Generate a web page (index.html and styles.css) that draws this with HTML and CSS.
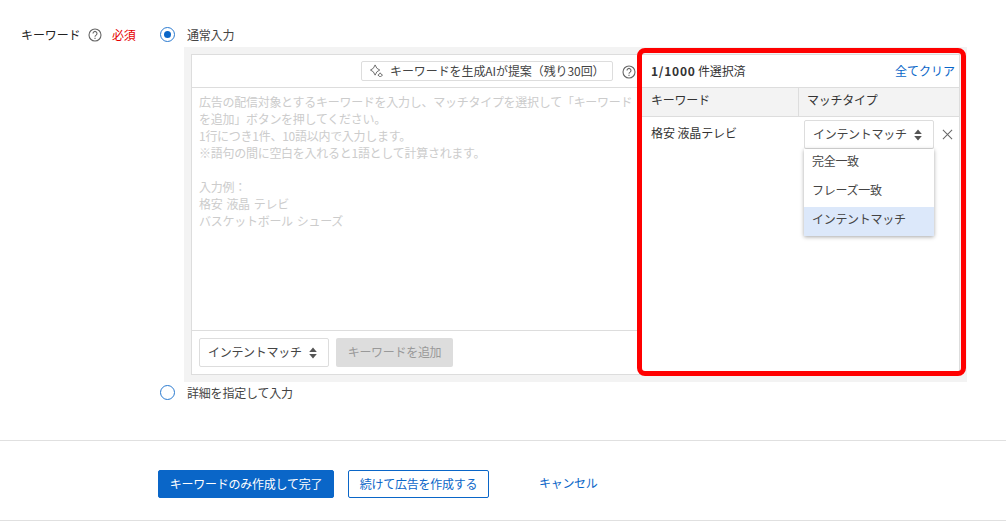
FILE: index.html
```html
<!DOCTYPE html>
<html lang="ja">
<head>
<meta charset="utf-8">
<title>キーワード</title>
<link rel="stylesheet" href="styles.css">
</head>
<body>
<main class="page">
  <section class="form-row">
    <div class="label-col">
      <span class="label">キーワード</span>
      <svg class="help" viewBox="0 0 14 14"><circle cx="7" cy="7" r="6" /><path d="M5 5.4a2 2 0 1 1 3.1 1.7c-.8.5-1.1.9-1.1 1.7" /><path d="M7 9.8v1.2" /></svg>
      <span class="required">必須</span>
    </div>
    <div class="input-col">
      <div class="radio-line">
        <span class="radio checked"></span>
        <span class="radio-text">通常入力</span>
      </div>
      <div class="gray-panel">
        <div class="editor">
          <div class="left-pane">
            <div class="toolbar">
              <div class="ai-button">
                <svg class="sparkle" viewBox="0 0 14 14"><path d="M5.5 1 L7.4 4.6 L10.5 6.5 L7.4 8.4 L5.5 12 L3.6 8.4 L0.5 6.5 L3.6 4.6 Z" /><path d="M11 9.5 L12 11 L13.5 12 L12 13 L11 14 L10 13 L8.5 12 L10 11 Z" /></svg>
                <span>キーワードを生成AIが提案（残り30回）</span>
              </div>
              <svg class="help" viewBox="0 0 14 14"><circle cx="7" cy="7" r="6" /><path d="M5 5.4a2 2 0 1 1 3.1 1.7c-.8.5-1.1.9-1.1 1.7" /><path d="M7 9.8v1.2" /></svg>
            </div>
            <div class="placeholder">
              <p>広告の配信対象とするキーワードを入力し、マッチタイプを選択して「キーワード</p>
              <p>を追加」ボタンを押してください。</p>
              <p>1行につき1件、10語以内で入力します。</p>
              <p>※語句の間に空白を入れると1語として計算されます。</p>
              <p class="blank">&nbsp;</p>
              <p>入力例：</p>
              <p>格安 液晶 テレビ</p>
              <p>バスケットボール シューズ</p>
            </div>
            <div class="add-bar">
              <div class="select">
                <span>インテントマッチ</span>
                <svg class="updown" viewBox="0 0 8 12"><path d="M4 0.5 L7.8 5 H0.2 Z" /><path d="M4 11.5 L7.8 7 H0.2 Z" /></svg>
              </div>
              <div class="add-button">キーワードを追加</div>
            </div>
          </div>
          <div class="right-pane">
            <div class="right-head">
              <span class="count"><b>1/1000</b> 件選択済</span>
              <a class="link">全てクリア</a>
            </div>
            <div class="table-head">
              <div class="th-keyword">キーワード</div>
              <div class="th-type">マッチタイプ</div>
            </div>
            <div class="table-row">
              <div class="td-keyword">格安 液晶テレビ</div>
              <div class="select row-select">
                <span>インテントマッチ</span>
                <svg class="updown" viewBox="0 0 8 12"><path d="M4 0.5 L7.8 5 H0.2 Z" /><path d="M4 11.5 L7.8 7 H0.2 Z" /></svg>
              </div>
              <svg class="close" viewBox="0 0 12 12"><path d="M1 1 L11 11 M11 1 L1 11" /></svg>
              <ul class="menu">
                <li>完全一致</li>
                <li>フレーズ一致</li>
                <li class="active">インテントマッチ</li>
              </ul>
            </div>
          </div>
          <div class="highlight"></div>
        </div>
      </div>
      <div class="radio-line second">
        <span class="radio"></span>
        <span class="radio-text">詳細を指定して入力</span>
      </div>
    </div>
  </section>
  <footer class="actions">
    <button class="btn primary">キーワードのみ作成して完了</button>
    <button class="btn outline">続けて広告を作成する</button>
    <a class="link cancel">キャンセル</a>
  </footer>
</main>
</body>
</html>
```
FILE: styles.css
```css
* { box-sizing: border-box; }
html, body { margin: 0; padding: 0; background: #fff; }
body {
  width: 1006px;
  height: 521px;
  overflow: hidden;
  font-family: "Noto Sans CJK JP", "Noto Sans", sans-serif;
  font-size: 12px;
  line-height: 17px;
  color: #333;
}
p { margin: 0; }
.page { display: flex; flex-direction: column; }
.form-row { display: flex; padding-top: 26px; height: 440px; }
.label-col { width: 160px; padding-left: 21px; display: flex; align-items: flex-start; }
.label { color: #222; width: 67px; letter-spacing: -0.1px; }
.help { width: 14px; height: 14px; fill: none; stroke: #666; stroke-width: 1.1; flex: none; margin-top: 2px; }
.required { color: #e60000; margin-left: 10px; letter-spacing: -0.2px; }
.input-col { display: flex; flex-direction: column; width: 807px; }
.radio-line { display: flex; align-items: center; height: 17px; }
.radio { width: 15px; height: 15px; border-radius: 50%; border: 1.5px solid #2a7ad0; background: #fff; flex: none; position: relative; }
.radio.checked::after { content: ""; position: absolute; left: 2.5px; top: 2.5px; width: 7px; height: 7px; border-radius: 50%; background: #0a66c8; }
.radio-text { margin-left: 12px; color: #444; letter-spacing: -0.2px; }
.gray-panel { margin: 4px 0 0 24px; background: #f3f3f3; padding: 7px; width: 783px; height: 335px; }
.editor { position: relative; display: flex; height: 321px; background: #fff; border: 1px solid #ddd; }
.left-pane { width: 450px; display: flex; flex-direction: column; }
.toolbar { height: 33px; display: flex; align-items: center; justify-content: flex-end; gap: 9px; border-bottom: 1px solid #ddd; flex: none; padding-right: 6px; }
.ai-button { display: flex; align-items: center; width: 252px; height: 20px; padding: 0 0 1px 8px; border: 1px solid #ddd; border-radius: 2px; color: #444; white-space: nowrap; letter-spacing: -0.08px; }
.ai-button span { margin-left: 7px; }
.sparkle { width: 13px; height: 13px; fill: none; stroke: #666; stroke-width: 1; flex: none; }
.placeholder { flex: 1; padding: 5px 0 0 7px; color: #ccc; white-space: nowrap; letter-spacing: -0.27px; word-spacing: 1.5px; overflow: hidden; }
.add-bar { height: 44px; flex: none; display: flex; align-items: center; gap: 7px; padding: 0 7px; border-top: 1px solid #ddd; }
.select { display: flex; align-items: center; gap: 7px; width: 130px; height: 29px; padding: 0 0 2px 8px; background: #fff; border: 1px solid #ddd; border-radius: 2px; color: #444; white-space: nowrap; letter-spacing: -0.3px; flex: none; }
.updown { width: 8px; height: 12px; fill: #555; flex: none; margin-top: 2px; }
.add-button { width: 117px; height: 29px; padding-bottom: 2px; display: flex; align-items: center; justify-content: center; background: #ddd; border-radius: 2px; color: #999; letter-spacing: -0.3px; }
.right-pane { flex: 1; display: flex; flex-direction: column; min-width: 0; }
.right-head { height: 33px; flex: none; display: flex; align-items: center; justify-content: space-between; padding: 0 4px 2px 9px; border-bottom: 1px solid #ddd; }
.count { color: #333; letter-spacing: -0.2px; }
.count b { letter-spacing: 0.75px; }
.link { color: #0a66c8; }
.table-head { height: 29px; flex: none; display: flex; background: #f3f3f3; border-bottom: 1px solid #ddd; line-height: 23px; letter-spacing: -0.25px; }
.th-keyword { width: 157px; padding-left: 9px; border-right: 1px solid #ddd; }
.th-type { padding-left: 8px; }
.table-row { position: relative; display: flex; align-items: flex-start; padding: 3px 0 0 9px; flex: 1; }
.td-keyword { width: 153px; padding-top: 4px; letter-spacing: -0.1px; }
.row-select { height: 29px; }
.close { width: 11px; height: 11px; fill: none; stroke: #666; stroke-width: 1.1; margin: 9px 0 0 8px; flex: none; }
.menu { position: absolute; left: 162px; top: 32px; width: 130px; margin: 0; padding: 0; list-style: none; background: #fff; box-shadow: 0 1px 4px rgba(0,0,0,.35); letter-spacing: -0.3px; }
.menu li { height: 29px; padding: 3px 0 0 8px; color: #444; }
.menu li.active { background: #dce8fa; }
.highlight { position: absolute; left: 445px; top: -7px; width: 329px; height: 328px; border: 5px solid #f00; border-radius: 8px; pointer-events: none; }
.radio-line.second { margin-top: 2px; }
.actions { display: flex; align-items: flex-start; height: 81px; border-top: 1px solid #e0e0e0; border-bottom: 1px solid #e0e0e0; padding: 29px 0 0 158px; }
.btn { height: 28px; font: inherit; border-radius: 2px; padding: 0 0 2px; letter-spacing: -0.25px; }
.primary { width: 176px; background: #0a66c8; border: 1px solid #0a66c8; color: #fff; }
.outline { width: 141px; margin-left: 14px; background: #fff; border: 1px solid #0a66c8; color: #0a66c8; }
.cancel { margin-left: 50px; line-height: 26px; letter-spacing: -0.3px; }
```
